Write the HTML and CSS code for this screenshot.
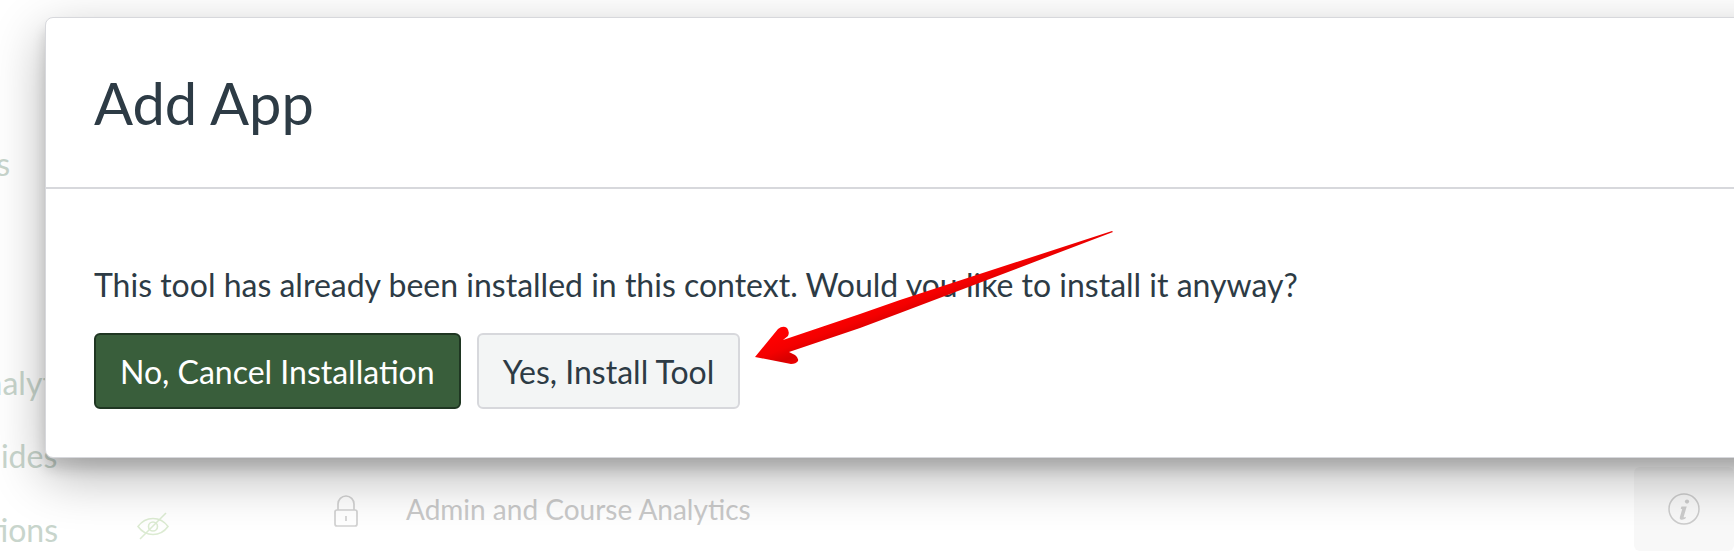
FILE: index.html
```html
<!DOCTYPE html>
<html lang="en">
<head>
<meta charset="utf-8">
<title>Add App</title>
<link rel="stylesheet" href="styles.css">
</head>
<body>
<div class="page">
  <nav class="side">
    <div class="side-item side-settings">Settings</div>
    <div class="side-item side-analytics">Analytics</div>
    <div class="side-item side-guides">Guides</div>
    <div class="side-item side-sections">Sections</div>
  </nav>
  <svg class="eye" viewBox="0 0 32 28" width="32" height="28" fill="none" stroke="#dcebd2" stroke-width="1.6">
    <path d="M1 14.5C5 9 10 6.5 16 6.5S27 9 31 14.5C27 20 22 22.5 16 22.5S5 20 1 14.5Z"/>
    <circle cx="16" cy="14.5" r="4.5"/>
    <path d="M3 27L29 1"/>
  </svg>
  <div class="row">
    <svg class="lock" viewBox="0 0 24 32" width="24" height="32" fill="none" stroke="#d2d2d2" stroke-width="1.7">
      <rect x="1" y="15" width="22" height="16" rx="2"/>
      <path d="M4 15V9a8 8 0 0 1 16 0v6"/>
      <path d="M12 21v5"/>
    </svg>
    <span class="row-name">Admin and Course Analytics</span>
  </div>
  <div class="tile">
    <svg class="info" viewBox="0 0 32 32" width="32" height="32">
      <circle cx="16" cy="16" r="15" fill="none" stroke="#cccccc" stroke-width="1.5"/>
      <circle cx="19" cy="8.6" r="2.1" fill="#cccccc"/>
      <path d="M13.5 13.5h5.2l-3 10.2c-.2.8.5 1 1.4.3l1 .8c-1.6 1.6-3.2 2-4.6 1.9-1.5-.2-2-1.2-1.6-2.6l2.3-7.8-1.5-.6z" fill="#cccccc"/>
    </svg>
  </div>
</div>

<section class="modal">
  <header class="modal-head">
    <h1 class="modal-title">Add App</h1>
  </header>
  <div class="modal-body">
    <p class="modal-text">This tool has already been installed in this context. Would you like to install it anyway?</p>
    <div class="actions">
      <button class="btn btn-primary" type="button">No, Cancel Installation</button>
      <button class="btn btn-default" type="button">Yes, Install Tool</button>
    </div>
  </div>
</section>

<svg class="arrow" viewBox="0 0 1734 558" width="1734" height="558">
  <defs>
    <linearGradient id="arrowFill" gradientUnits="userSpaceOnUse" x1="855" y1="307" x2="866" y2="337">
      <stop offset="0" stop-color="#ff0000"/>
      <stop offset=".45" stop-color="#f40000"/>
      <stop offset=".8" stop-color="#d80000"/>
      <stop offset="1" stop-color="#ee0000"/>
    </linearGradient>
  </defs>
  <path fill="url(#arrowFill)" d="M755 357L778 329Q783 325 787 328Q790 332 788 336L783 340L860 314L900 300L1112 231L1113 232L900 313L860 328L789 352L795 355Q799 358 798 361Q796 364 791 364Z"/>
</svg>
</body>
</html>
```
FILE: styles.css
```css
* { box-sizing: border-box; }
html, body { margin: 0; height: 100%; }
body {
  position: relative;
  width: 1734px;
  height: 558px;
  overflow: hidden;
  background: #fff;
  font-family: Lato, "Open Sans", sans-serif;
  color: #2d3b45;
}
.page {
  height: 100%;
  display: flex;
  align-items: flex-start;
}
.side {
  width: 137px;
  flex: none;
  overflow: hidden;
  font-size: 32px;
  color: #c8d5cc;
  white-space: nowrap;
}
.side-item { line-height: 40px; }
.side-settings { margin-top: 144px; margin-left: -102px; }
.side-analytics { margin-top: 179px; margin-left: -37px; }
.side-guides { margin-top: 33px; margin-left: -40px; }
.side-sections { margin-top: 34px; margin-left: -61px; }
.eye { flex: none; margin-top: 512px; }
.row {
  flex: none;
  display: flex;
  align-items: center;
  margin-left: 165px;
  margin-top: 495px;
  gap: 48px;
}
.row-name { font-size: 28px; color: #c9c9c9; white-space: nowrap; line-height: 28px; padding-bottom: 4px; }
.tile {
  flex: none;
  width: 100px;
  height: 84px;
  margin-top: 467px;
  margin-left: auto;
  border-radius: 6px;
  background: #f8f8f8;
  display: flex;
  align-items: center;
  justify-content: center;
}
.modal {
  position: absolute;
  left: 45px;
  top: 17px;
  width: 1800px;
  height: 441px;
  background: #fff;
  border: 1px solid #d7d8dc;
  border-radius: 8px;
  box-shadow: 0 11px 13px rgba(0, 0, 0, .14), 0 18px 52px rgba(0, 0, 0, .3);
}
.modal-head {
  height: 171px;
  padding: 0 48px;
  display: flex;
  align-items: center;
  border-bottom: 2px solid #d7d8dc;
}
.modal-title { margin: 0; font-size: 57.8px; font-weight: 400; line-height: 1.2; }
.modal-body { padding: 0 48px; }
.modal-text { margin: 0; padding-top: 76px; font-size: 32px; line-height: 40px; }
.actions { display: flex; gap: 16px; margin-top: 28px; }
.btn {
  height: 76px;
  padding: 0 24px;
  border-radius: 6px;
  font: 400 32px Lato, "Open Sans", sans-serif;
}
.btn-primary { background: #395e3b; border: 2px solid #1f3622; color: #fff; }
.btn-default { background: #f3f5f5; border: 2px solid #d7d8dc; color: #2d3b45; }
.arrow { position: absolute; left: 0; top: 0; pointer-events: none; }
```
